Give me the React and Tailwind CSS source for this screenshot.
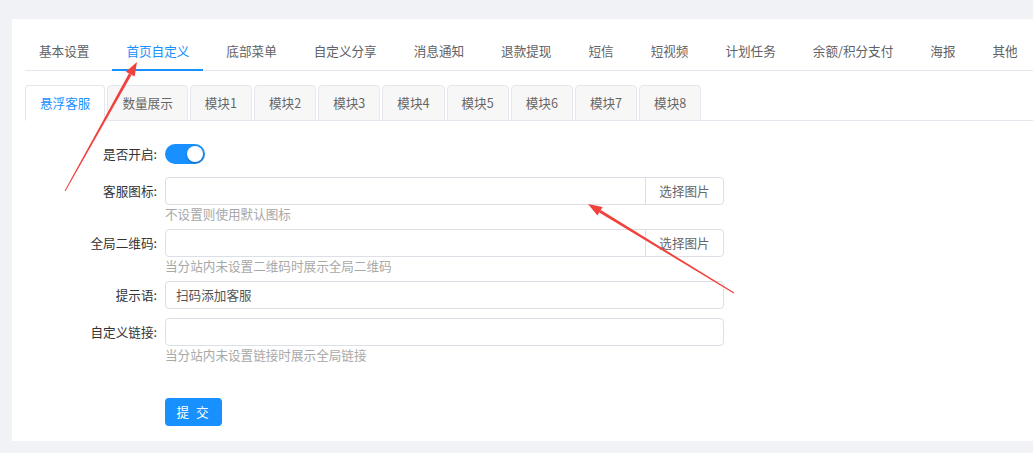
import React from "react";

const mainTabs = ["基本设置", "首页自定义", "底部菜单", "自定义分享", "消息通知", "退款提现", "短信", "短视频", "计划任务", "余额/积分支付", "海报", "其他"];
const subTabs = ["悬浮客服", "数量展示", "模块1", "模块2", "模块3", "模块4", "模块5", "模块6", "模块7", "模块8"];

function Label({ children }) {
  return (
    <div className="w-[140px] shrink-0 pr-[8px] text-right h-[28px] leading-[28px] text-[#333]">{children}</div>
  );
}

function Hint({ children }) {
  return <div className="h-[18px] leading-[18px] text-[#a8a8a8]">{children}</div>;
}

function ImageInput() {
  return (
    <div className="w-[559px] h-[28px] flex border border-[#dcdfe6] rounded-[4px] bg-white">
      <div className="flex-1" />
      <div className="w-[78px] border-l border-[#dcdfe6] flex items-center justify-center text-[#666]">选择图片</div>
    </div>
  );
}

export default function App() {
  return (
    <div
      className="relative h-[453px] overflow-hidden bg-[#f0f2f5] pl-[12px] pt-[19px] text-[12.6px]"
      style={{ fontFamily: '"Noto Sans CJK SC", "Noto Sans", sans-serif' }}
    >
      <div className="h-[422px] bg-white pl-[13px] pt-[15px]">
        {/* main tabs */}
        <div className="flex gap-[9px] border-b border-[#e4e7ed] whitespace-nowrap">
          {mainTabs.map((t, i) => (
            <div
              key={t}
              className={
                i === 1
                  ? "h-[37px] -mb-px px-[14px] flex items-center border-b-2 border-[#1890ff] text-[#1890ff]"
                  : "h-[37px] -mb-px px-[14px] flex items-center border-b-2 border-transparent text-[#606266]"
              }
            >
              {t}
            </div>
          ))}
        </div>

        {/* sub tabs */}
        <div className="mt-[14px] flex gap-[2px] border-b border-[#e4e7ed] whitespace-nowrap">
          {subTabs.map((t, i) => (
            <div
              key={t}
              className={
                i === 0
                  ? "h-[36px] -mb-px px-[14px] flex items-center border border-[#e4e7ed] border-b-white rounded-t-[4px] bg-white text-[#1890ff]"
                  : "h-[36px] -mb-px px-[14px] flex items-center border border-[#e4e7ed] rounded-t-[4px] bg-[#f7f7f8] text-[#666]"
              }
            >
              {t}
            </div>
          ))}
        </div>

        {/* form */}
        <div className="pt-[19px]">
          <div className="flex mb-[9px]">
            <Label>是否开启:</Label>
            <div className="h-[28px] flex items-center">
              <div className="w-[40px] h-[20px] rounded-full bg-[#1890ff] flex items-center justify-end pr-[2px]">
                <div className="w-[16px] h-[16px] rounded-full bg-white shadow-[0_1px_2px_rgba(0,0,0,0.3)]" />
              </div>
            </div>
          </div>

          <div className="flex mb-[6px]">
            <Label>客服图标:</Label>
            <div>
              <ImageInput />
              <Hint>不设置则使用默认图标</Hint>
            </div>
          </div>

          <div className="flex mb-[6px]">
            <Label>全局二维码:</Label>
            <div>
              <ImageInput />
              <Hint>当分站内未设置二维码时展示全局二维码</Hint>
            </div>
          </div>

          <div className="flex mb-[9px]">
            <Label>提示语:</Label>
            <div className="w-[559px] h-[28px] border border-[#dcdfe6] rounded-[4px] pl-[10px] leading-[26px] text-[#555]">扫码添加客服</div>
          </div>

          <div className="flex">
            <Label>自定义链接:</Label>
            <div>
              <div className="w-[559px] h-[28px] border border-[#dcdfe6] rounded-[4px]" />
              <Hint>当分站内未设置链接时展示全局链接</Hint>
            </div>
          </div>

          <div className="flex mt-[34px]">
            <div className="w-[140px] shrink-0" />
            <button className="w-[57px] h-[28px] rounded-[4px] bg-[#1890ff] text-white tracking-[2px]">提 交</button>
          </div>
        </div>
      </div>

      {/* annotation arrows */}
      <svg className="absolute left-0 top-0 pointer-events-none" width="1033" height="453" viewBox="0 0 1033 453">
        <polygon points="65.4,191.2 131.5,74.9 128.9,73.5 64.6,190.8" fill="#f0413c" />
        <polygon points="137,62 134.6,76.6 125.8,71.8" fill="#f0413c" />
        <polygon points="734.3,292.6 600.8,210 599.2,212.6 733.7,293.4" fill="#f0413c" />
        <polygon points="588,204 602.6,207 597.4,215.6" fill="#f0413c" />
      </svg>
    </div>
  );
}
